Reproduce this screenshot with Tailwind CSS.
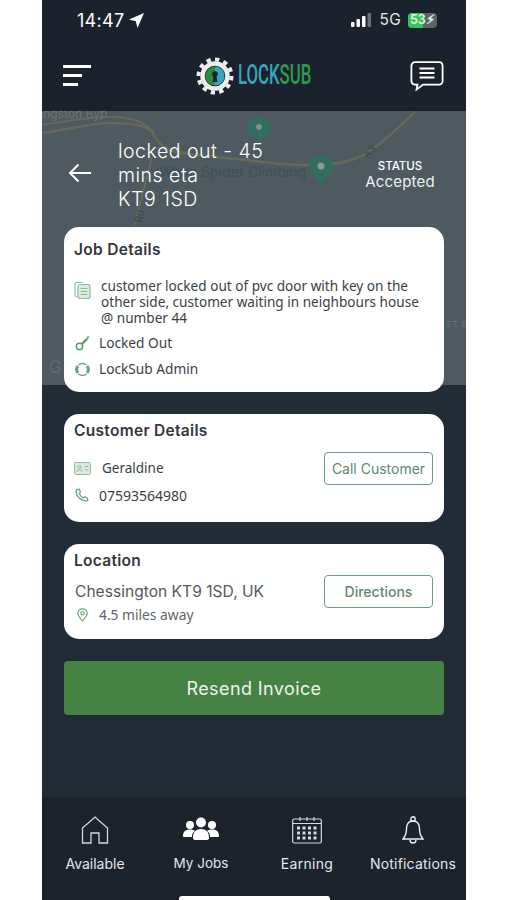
<!DOCTYPE html>
<html lang="en">
<head>
<meta charset="UTF-8">
<meta name="viewport" content="width=device-width, initial-scale=1.0">
<title>LockSub Job</title>
<script src="https://cdn.jsdelivr.net/npm/@tailwindcss/browser@4"></script>
</head>
<body class="bg-white overflow-hidden font-['Inter',sans-serif]">
<div class="relative w-[424px] h-[900px] ml-[42px] bg-[#222c36] overflow-hidden flex flex-col">

  <!-- map behind the title and first card -->
  <svg class="absolute left-0 top-[111px] w-[424px] h-[274px] bg-[#4e5960]" viewBox="0 0 424 274" fill="none">
    <path d="M0 22C30 18 50 12 67 12C90 12 105 14 110 21C116 32 122 38 135 41C165 46 190 47 230 52C270 56 300 54 317 46C335 38 350 22 373 1" stroke="#66695a" stroke-width="2.500"/>
    <path d="M0 14C30 9 50 6 67 6C90 6 105 12 112 22" stroke="#66695a" stroke-width="2"/>
    <path d="M110 46C104 70 98 92 93 114" stroke="#66695a" stroke-width="2"/>
    <path d="M217 6C209 6 205 12 205 17C205 23 212 27 217 31C222 27 229 23 229 17C229 12 225 6 217 6Z" fill="#326d5e"/>
    <circle cx="217" cy="16" r="3" fill="#7d8f8c"/>
    <path d="M279 44C271 44 267 50 267 56C267 63 275 68 279 74C283 68 291 63 291 56C291 50 287 44 279 44Z" fill="#326d5e"/>
    <circle cx="279" cy="55" r="3.500" fill="#8a9a97"/>
    <text x="117" y="66" font-family="Inter, sans-serif" font-size="14" fill="#3c5358">White Spider Climbing</text>
    <text x="-10" y="7" font-family="Inter, sans-serif" font-size="12" fill="#6d7470">Kingston Byp</text>
    <text x="0" y="0" transform="translate(326 48) rotate(-48)" font-family="Inter, sans-serif" font-size="10" fill="#3c464c">A3</text>
    <text x="0" y="0" transform="translate(100 112) rotate(-80)" font-family="Inter, sans-serif" font-size="10" fill="#3c464c">Rd</text>
    <text x="7" y="262" font-family="Inter, sans-serif" font-size="17" fill="#5d6b78">G</text>
    <text x="404" y="216" font-family="Inter, sans-serif" font-size="8" letter-spacing="1" fill="#6d777c">ST E</text>
  </svg>

  <!-- status bar -->
  <div class="relative h-[40px] flex items-center justify-between bg-[#1c222d] pl-[35px] pr-[29px] text-white">
    <div class="flex items-center gap-[5px]">
      <span class="text-[18px] tracking-[0.3px] font-normal">14:47</span>
      <svg class="w-[15px] h-[15px]" viewBox="0 0 15 15"><path d="M15 0L8.500 15L6.800 8.200L0 6.500Z" fill="#fff"/></svg>
    </div>
    <div class="flex items-center gap-[7px]">
      <svg class="w-[21px] h-[14px]" viewBox="0 0 21 14">
        <rect x="0" y="9" width="3.500" height="5" rx="1" fill="#fff"/>
        <rect x="5.500" y="6" width="3.500" height="8" rx="1" fill="#fff"/>
        <rect x="11" y="3" width="3.500" height="11" rx="1" fill="#fff"/>
        <rect x="16.500" y="0" width="3.500" height="14" rx="1" fill="#6b7077"/>
      </svg>
      <span class="text-[15.500px] tracking-[0.3px] text-[#e4e6e8]">5G</span>
      <div class="relative w-[29px] h-[15px] rounded-[4px] bg-[#5d6268] overflow-hidden flex items-center">
        <div class="absolute left-0 top-0 bottom-0 w-[15px] bg-[#35c759]"></div>
        <span class="relative pl-[2px] text-[12.500px] leading-none font-semibold text-[#e6f4e8]">53⚡︎</span>
      </div>
    </div>
  </div>

  <!-- header -->
  <div class="relative h-[71px] flex items-center justify-between bg-[#1c222d] pl-[21px] pr-[22px]">
    <div class="flex flex-col gap-[6.500px] items-start w-[28px]">
      <span class="block h-[2.500px] w-[28px] bg-white"></span>
      <span class="block h-[2.500px] w-[19px] bg-white"></span>
      <span class="block h-[2.500px] w-[15px] bg-white"></span>
    </div>
    <div class="flex items-center gap-[4px] ml-[6px]">
      <svg class="w-[38px] h-[38px]" viewBox="0 0 38 38">
        <circle cx="19" cy="19" r="16.500" fill="none" stroke="#eceeee" stroke-width="4" stroke-dasharray="4.200 4.133" pathLength="100"/>
        <circle cx="19" cy="19" r="12.500" fill="none" stroke="#eceeee" stroke-width="4.500"/>
        <path d="M19 9.500A9.500 9.500 0 0 1 19 28.500Z" fill="#35a7bd"/>
        <path d="M19 9.500A9.500 9.500 0 0 0 19 28.500Z" fill="#2d8a45"/>
        <circle cx="19" cy="17" r="2.800" fill="#1c222d"/>
        <path d="M17.600 18H20.400L21.500 25H16.500Z" fill="#1c222d"/>
      </svg>
      <span class="w-[74px] whitespace-nowrap text-[27px] leading-none font-medium font-['Roboto',sans-serif] origin-left scale-x-[0.62]"><span class="text-[#35a7bd]">LOCK</span><span class="text-[#2d9a4a]">SUB</span></span>
    </div>
    <svg class="w-[34px] h-[30px]" viewBox="0 0 34 30" fill="none" stroke="#fff">
      <path d="M5 1.200H29C31 1.200 32.600 2.800 32.600 5V20C32.600 22 31 23.600 29 23.600H13L6.500 28.600L7.500 23.600H5C3 23.600 1.400 22 1.400 20V5C1.400 2.800 3 1.200 5 1.200Z" stroke-width="1.800"/>
      <path d="M9.500 7.500H24.500M9.500 12H24.500M9.500 16.500H24.500" stroke-width="1.800"/>
    </svg>
  </div>

  <!-- job title row -->
  <div class="relative h-[116px] pl-[26px] pr-[30px] flex items-start text-white">
    <svg class="w-[24px] h-[20px] mt-[52px] shrink-0" viewBox="0 0 24 20" fill="none" stroke="#fff" stroke-width="2"><path d="M23 10H2M10.500 1.500L2 10L10.500 18.500"/></svg>
    <div class="ml-[26px] mt-[28px] w-[190px] text-[19.500px] leading-[24px] tracking-[0.5px] font-light">locked out - 45 mins eta<br>KT9 1SD</div>
    <div class="ml-auto mt-[48px] w-[72px] flex flex-col items-center">
      <span class="text-[11.500px] leading-[14px] font-medium">STATUS</span>
      <span class="text-[15px] leading-[18px] tracking-[0.2px] text-[#eef0f1]">Accepted</span>
    </div>
  </div>

  <div class="relative flex flex-col px-[22px] gap-[22px] font-['Noto_Sans',sans-serif] text-[#3a3f44]">
    <!-- job details -->
    <div class="h-[165px] bg-white rounded-[15px] pl-[10px] pr-[11px] pt-[13px]">
      <h2 class="text-[15.500px] leading-[20px] tracking-[0.3px] font-semibold text-[#33373b] font-['Inter',sans-serif]">Job Details</h2>
      <div class="mt-[18px] flex items-start">
        <svg class="w-[17px] h-[18px] mt-[3px] shrink-0" viewBox="0 0 17 18" fill="none" stroke="#8fbb9c" stroke-width="1.200">
          <path d="M3 15.500H2.500C1.500 15.500 1 15 1 14V3C1 2 1.500 1.500 2.500 1.500H9"/>
          <rect x="4" y="3.500" width="12" height="14" rx="2" fill="#dcebe0"/>
          <path d="M6.500 7.500H13.500M6.500 10.500H13.500M6.500 13.500H13.500"/>
        </svg>
        <p class="ml-[10px] text-[13.600px] leading-[16px]">customer locked out of pvc door with key on the other side, customer waiting in neighbours house @ number 44</p>
      </div>
      <div class="mt-[8px] flex items-center h-[18px]">
        <svg class="w-[15px] h-[15px] ml-[1px] shrink-0" viewBox="0 0 15 15" fill="none" stroke="#5f9c74"><circle cx="4.500" cy="10.500" r="3.200" stroke-width="1.500"/><path d="M6.800 8.200L12.500 2.500" stroke-width="2.400"/><path d="M12 1.500L14 1" stroke-width="1.500"/></svg>
        <span class="ml-[9px] text-[13.700px]">Locked Out</span>
      </div>
      <div class="mt-[8px] flex items-center h-[18px]">
        <svg class="w-[15px] h-[15px] ml-[1px] shrink-0" viewBox="0 0 15 15" fill="none" stroke="#6aa681"><path d="M3 11A5.500 5.500 0 0 1 3 4" stroke-width="3"/><path d="M12 4A5.500 5.500 0 0 1 12 11" stroke-width="3"/><path d="M3.500 3A5.800 5.800 0 0 1 11.500 3M11.500 12A5.800 5.800 0 0 1 3.500 12" stroke-width="1.500"/></svg>
        <span class="ml-[9px] text-[13.700px]">LockSub Admin</span>
      </div>
    </div>

    <!-- customer details -->
    <div class="relative h-[108px] bg-white rounded-[15px] pl-[10px] pr-[11px] pt-[7px]">
      <h2 class="text-[15.500px] leading-[20px] tracking-[0.3px] font-semibold text-[#33373b] font-['Inter',sans-serif]">Customer Details</h2>
      <div class="mt-[18px] flex items-center h-[18px]">
        <svg class="w-[17px] h-[13px] shrink-0" viewBox="0 0 17 13" fill="#dcebe0" stroke="#8fbb9c"><rect x=".5" y=".5" width="16" height="12" rx="1"/><circle cx="5.500" cy="5" r="1.500"/><path d="M3 10C3 7 8 7 8 10M10.500 4.500H14.500M10.500 8H14.500"/></svg>
        <span class="ml-[11px] text-[13.500px]">Geraldine</span>
      </div>
      <div class="mt-[9px] flex items-center h-[18px]">
        <svg class="w-[14px] h-[14px] ml-[1px] shrink-0" viewBox="0 0 14 14" fill="none" stroke="#6aa681" stroke-width="1.300"><path d="M1.500 1.500C.5 5 2 8 4.500 10.300C7 12.500 10 13.500 12.800 12.600L12.300 10L9.600 8.700L8.300 10C6.300 9 5 7.500 4.200 5.600L5.400 4.400L4.400 1.200Z"/></svg>
        <span class="ml-[10px] text-[14px]">07593564980</span>
      </div>
      <button class="absolute right-[11px] top-[38px] w-[109px] h-[33px] rounded-[4px] border-[1.500px] border-[#6f9c7d] text-[14px] text-[#62886e] font-['Inter',sans-serif]">Call Customer</button>
    </div>

    <!-- location -->
    <div class="relative h-[95px] bg-white rounded-[15px] pl-[10px] pr-[11px] pt-[7px]">
      <h2 class="text-[15.500px] leading-[20px] tracking-[0.3px] font-semibold text-[#33373b] font-['Inter',sans-serif]">Location</h2>
      <p class="mt-[10px] ml-[1px] text-[15.600px] leading-[22px] text-[#55595d] font-['Inter',sans-serif]">Chessington KT9 1SD, UK</p>
      <div class="mt-[3px] flex items-center h-[18px] text-[#62666a]">
        <svg class="w-[11px] h-[14px] ml-[3px] shrink-0" viewBox="0 0 11 14" fill="none" stroke="#6aa681" stroke-width="1.200"><path d="M5.500 .8C2.700 .8 .8 2.800 .8 5.300C.8 8.300 4 10.800 5.500 13C7 10.800 10.200 8.300 10.200 5.300C10.200 2.800 8.300 .8 5.500 .8Z"/><circle cx="5.500" cy="5.200" r="1.700"/></svg>
        <span class="ml-[11px] text-[13.800px]">4.5 miles away</span>
      </div>
      <button class="absolute right-[11px] top-[31px] w-[109px] h-[33px] rounded-[4px] border-[1.500px] border-[#6f9c7d] text-[14px] font-medium text-[#62886e] font-['Inter',sans-serif]">Directions</button>
    </div>

    <button class="h-[54px] pt-[1px] rounded-[4px] bg-[#458244] text-[18px] tracking-[0.4px] text-[#eef3ee] font-['Inter',sans-serif]">Resend Invoice</button>
  </div>

  <!-- bottom nav -->
  <div class="absolute left-0 right-0 bottom-0 h-[103px] bg-[#1c232d] grid grid-cols-4 text-[#e4e6e8] text-[14px]">
    <div class="flex flex-col items-center pt-[19px]">
      <svg class="w-[28px] h-[28px]" viewBox="0 0 28 28" fill="none" stroke="#d5d8db" stroke-width="1.300"><path d="M1.500 12L14 1L26.500 12V27H18V17H10V27H1.500Z"/></svg>
      <span class="mt-[9px]">Available</span>
    </div>
    <div class="flex flex-col items-center pt-[19px]">
      <svg class="w-[36px] h-[28px]" viewBox="0 0 36 28" fill="#fff">
        <circle cx="7" cy="9" r="4"/><circle cx="29" cy="9" r="4"/><circle cx="18" cy="6.500" r="5"/>
        <path d="M0 20C0 15 3 13.500 7 13.500C9 13.500 11 14 12 15C9 17 9 19 9 21H3C1 21 0 21 0 20ZM36 20C36 15 33 13.500 29 13.500C27 13.500 25 14 24 15C27 17 27 19 27 21H33C35 21 36 21 36 20Z"/>
        <path d="M10 22C10 16 13 13 18 13C23 13 26 16 26 22C26 23.500 25 24 23 24H13C11 24 10 23.500 10 22Z"/>
      </svg>
      <span class="mt-[9px] text-[13.500px]">My Jobs</span>
    </div>
    <div class="flex flex-col items-center pt-[19px]">
      <svg class="w-[30px] h-[28px]" viewBox="0 0 30 28" fill="none" stroke="#d5d8db" stroke-width="1.200">
        <rect x=".7" y="3" width="28.600" height="24" rx="1.500"/><path d="M.7 7.500H29.300M8 1V5M15 1V5M22 1V5"/>
        <g fill="#d5d8db" stroke="none">
          <rect x="5" y="10.500" width="3" height="3"/><rect x="10.500" y="10.500" width="3" height="3"/><rect x="16" y="10.500" width="3" height="3"/><rect x="21.500" y="10.500" width="3" height="3"/>
          <rect x="5" y="15.500" width="3" height="3"/><rect x="10.500" y="15.500" width="3" height="3"/><rect x="16" y="15.500" width="3" height="3"/><rect x="21.500" y="15.500" width="3" height="3"/>
          <rect x="5" y="20.500" width="3" height="3"/><rect x="10.500" y="20.500" width="3" height="3"/><rect x="16" y="20.500" width="3" height="3"/><rect x="21.500" y="20.500" width="3" height="3"/>
        </g>
      </svg>
      <span class="mt-[9px] tracking-[0.3px]">Earning</span>
    </div>
    <div class="flex flex-col items-center pt-[19px]">
      <svg class="w-[22px] h-[28px]" viewBox="0 0 22 28" fill="none" stroke="#eceef0" stroke-width="1.400"><circle cx="11" cy="3" r="2.200"/><path d="M11 5C6 5 4.500 9 4.500 13C4.500 18 3.500 20 1 23H21C18.500 20 17.500 18 17.500 13C17.500 9 16 5 11 5Z"/><path d="M8 24C8 26 9.500 27 11 27C12.500 27 14 26 14 24"/></svg>
      <span class="mt-[9px] tracking-[0.2px]">Notifications</span>
    </div>
    <div class="absolute left-[137px] bottom-0 w-[151px] h-[4px] rounded-t-[3px] bg-white"></div>
  </div>
</div>
</body>
</html>
